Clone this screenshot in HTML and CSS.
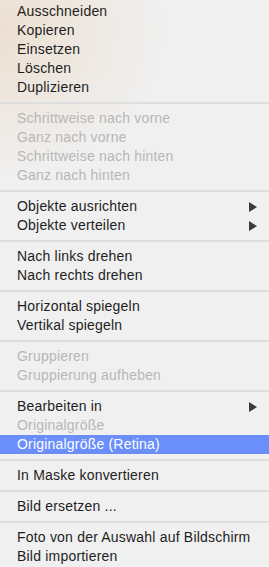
FILE: index.html
```html
<!DOCTYPE html>
<html lang="de">
<head>
<meta charset="UTF-8" />
<meta name="viewport" content="width=device-width, initial-scale=1" />
<title>Kontextmenü</title>
<link rel="stylesheet" href="styles.css">
</head>
<body>

<div class="menu">
  <div class="item">Ausschneiden</div>
  <div class="item">Kopieren</div>
  <div class="item">Einsetzen</div>
  <div class="item">Löschen</div>
  <div class="item">Duplizieren</div>
  <div class="sep"></div>
  <div class="item off">Schrittweise nach vorne</div>
  <div class="item off">Ganz nach vorne</div>
  <div class="item off">Schrittweise nach hinten</div>
  <div class="item off">Ganz nach hinten</div>
  <div class="sep"></div>
  <div class="item sub">Objekte ausrichten <span class="arrow"></span></div>
  <div class="item sub">Objekte verteilen <span class="arrow"></span></div>
  <div class="sep"></div>
  <div class="item">Nach links drehen</div>
  <div class="item">Nach rechts drehen</div>
  <div class="sep"></div>
  <div class="item">Horizontal spiegeln</div>
  <div class="item">Vertikal spiegeln</div>
  <div class="sep"></div>
  <div class="item off">Gruppieren</div>
  <div class="item off">Gruppierung aufheben</div>
  <div class="sep"></div>
  <div class="item sub">Bearbeiten in <span class="arrow"></span></div>
  <div class="item off">Originalgröße</div>
  <div class="item active">Originalgröße (Retina)</div>
  <div class="sep"></div>
  <div class="item">In Maske konvertieren</div>
  <div class="sep"></div>
  <div class="item">Bild ersetzen ...</div>
  <div class="sep"></div>
  <div class="item">Foto von der Auswahl auf Bildschirm</div>
  <div class="item">Bild importieren</div>
</div>

</body>
</html>
```

FILE: styles.css
```css
body {
  margin: 0;
  background: #f0f0f0;
  font-family: "Liberation Sans", Arial, sans-serif;
}
.menu {
  height: 567px;
  padding-top: 2px;
  box-sizing: border-box;
  background:
    radial-gradient(ellipse 170px 150px at 0 30px, rgba(236, 222, 206, 0.9), rgba(240, 240, 240, 0) 100%),
    #f0f0f0;
}
.item {
  height: 19px;
  line-height: 19px;
  padding-left: 17px;
  padding-right: 12px;
  font-size: 14px;
  letter-spacing: 0.2px;
  color: #1e1e1e;
  white-space: nowrap;
}
.item.off {
  color: #b7b7b7;
}
.item.active {
  background: #6a8efa;
  color: #fff;
}
.item.sub {
  display: flex;
  justify-content: space-between;
  align-items: center;
}
/* Pfeil fuer Untermenue */
.arrow {
  width: 0;
  height: 0;
  border-top: 5px solid transparent;
  border-bottom: 5px solid transparent;
  border-left: 8px solid #3a3a3a;
}
.sep {
  height: 12px;
  padding-top: 5px;
  box-sizing: border-box;
}
.sep::after {
  content: "";
  display: block;
  height: 2px;
  background: #dedede;
}
```
